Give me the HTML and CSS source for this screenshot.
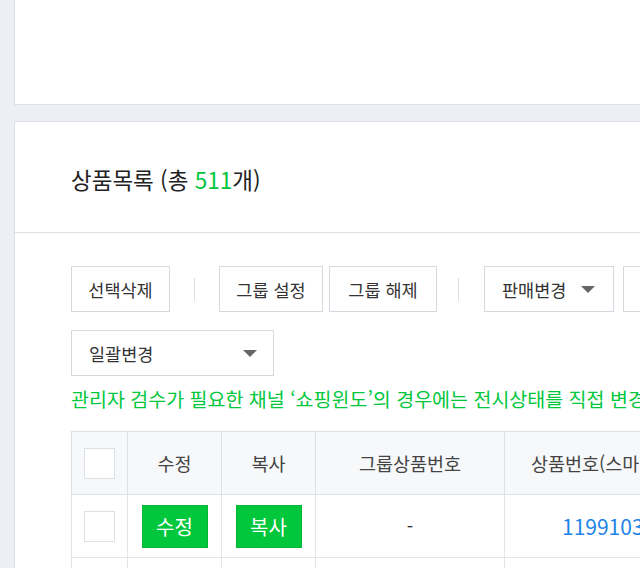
FILE: index.html
```html
<!DOCTYPE html>
<html lang="ko">
<head>
<meta charset="utf-8">
<link rel="stylesheet" href="styles.css">
</head>
<body>
<div class="page">
  <div class="card card-top"></div>
  <div class="card card-list">
    <div class="list-head">
      <h2 class="title">상품목록 (총 <span class="count">511</span>개)</h2>
    </div>
    <div class="list-body">
      <div class="toolbar">
        <button class="btn w-del">선택삭제</button>
        <span class="sep sep1"></span>
        <button class="btn w-grp1">그룹 설정</button>
        <button class="btn w-grp2">그룹 해제</button>
        <span class="sep sep2"></span>
        <button class="btn drop w-sale">판매변경 <i class="caret"></i></button>
        <button class="btn drop w-next">전시변경 <i class="caret"></i></button>
      </div>
      <div class="toolbar row2">
        <button class="btn drop w-bulk">일괄변경 <i class="caret"></i></button>
      </div>
      <p class="notice">관리자 검수가 필요한 채널 ‘쇼핑윈도’의 경우에는 전시상태를 직접 변경할 수 없습니다.</p>
      <table class="grid">
        <colgroup>
          <col class="c-chk"><col class="c-edit"><col class="c-copy"><col class="c-grp"><col class="c-no">
        </colgroup>
        <thead>
          <tr>
            <th><span class="chk"></span></th>
            <th>수정</th>
            <th>복사</th>
            <th>그룹상품번호</th>
            <th class="th-no">상품번호(스마트스토어)</th>
          </tr>
        </thead>
        <tbody>
          <tr>
            <td><span class="chk"></span></td>
            <td><button class="gbtn">수정</button></td>
            <td><button class="gbtn">복사</button></td>
            <td>-</td>
            <td class="num-cell"><a class="num">11991034567</a></td>
          </tr>
          <tr>
            <td><span class="chk"></span></td>
            <td></td><td></td><td></td><td></td>
          </tr>
        </tbody>
      </table>
    </div>
  </div>
</div>
</body>
</html>
```
FILE: styles.css
```css
html, body {
  margin: 0;
  padding: 0;
  background: #eceff6;
  overflow: hidden;
  font-family: "Noto Sans CJK KR", "Noto Sans", sans-serif;
  color: #333;
}
.page {
  padding-left: 14px;
  width: 760px;
}
.card {
  background: #fff;
  border: 1px solid #dcdfe6;
}
.card-top {
  margin-top: -1px;
  box-sizing: border-box;
  height: 106px;
}
.card-list {
  margin-top: 16px;
}
.list-head {
  height: 110px;
  border-bottom: 1px solid #dcdfe6;
  display: flex;
  align-items: center;
  padding-left: 56px;
}
.title {
  margin: 0;
  font-size: 22.5px;
  font-weight: 400;
  color: #222;
  letter-spacing: 0;
  padding-top: 4px;
}
.count { color: #00c73c; }
.list-body {
  padding: 33px 0 0 56px;
}
.toolbar {
  display: flex;
  align-items: center;
  gap: 6px;
  height: 46px;
  white-space: nowrap;
}
.row2 { margin-top: 18px; }
.btn {
  box-sizing: border-box;
  height: 46px;
  border: 1px solid #d5d8de;
  background: #fff;
  font-family: inherit;
  font-size: 17.5px;
  color: #333;
  padding: 0 17px;
  text-align: left;
  display: flex;
  align-items: center;
  flex: none;
}
.w-del { width: 99px; justify-content: center; padding: 0; }
.w-grp1 { width: 104px; justify-content: center; padding: 0; }
.w-grp2 { width: 108px; justify-content: center; padding: 0; }
.w-sale { width: 130px; justify-content: space-between; padding-right: 18px; }
.w-next { width: 130px; justify-content: space-between; margin-left: 3px; }
.w-bulk { width: 203px; justify-content: space-between; padding-right: 16px; }
.sep {
  width: 1px;
  height: 23px;
  background: #dcdfe6;
  flex: none;
}
.sep1 { margin: 0 18px 0 18px; }
.sep2 { margin: 0 19px 0 15px; }
.caret {
  width: 0;
  height: 0;
  border-left: 7px solid transparent;
  border-right: 7px solid transparent;
  border-top: 7px solid #666;
}
.notice {
  margin: 10px 0 0;
  font-size: 19.5px;
  color: #00c73c;
  white-space: nowrap;
  letter-spacing: 0;
  line-height: 26px;
}
.grid {
  margin-top: 19px;
  border-collapse: collapse;
  table-layout: fixed;
  width: 683px;
  border: 1px solid #dcdfe6;
}
.c-chk { width: 56px; }
.c-edit { width: 94px; }
.c-copy { width: 94px; }
.c-grp { width: 189px; }
.c-no { width: 250px; }
.grid th, .grid td {
  border: 1px solid #e3e5ea;
  text-align: center;
  font-size: 18.5px;
  font-weight: 400;
  padding: 0;
  white-space: nowrap;
  overflow: hidden;
}
.grid th {
  height: 62px;
  background: #f7f8fa;
  color: #444;
  border-color: #dcdfe6;
}
.th-no { text-align: left !important; padding-left: 26px !important; }
.grid td { height: 62px; color: #333; background: #fff; }
.chk {
  display: block;
  width: 31px;
  height: 31px;
  box-sizing: border-box;
  border: 1px solid #dcdfe6;
  background: #fff;
  margin: 0 auto;
}
.gbtn {
  width: 66px;
  height: 43px;
  border: 1px solid #05b535;
  background: #00c73c;
  color: #fff;
  font-family: inherit;
  font-size: 20px;
  padding: 0;
}
.num {
  color: #1f84e6;
  font-size: 21px;
  text-decoration: none;
}
.num-cell { text-align: left !important; padding-left: 57px !important; }
```
